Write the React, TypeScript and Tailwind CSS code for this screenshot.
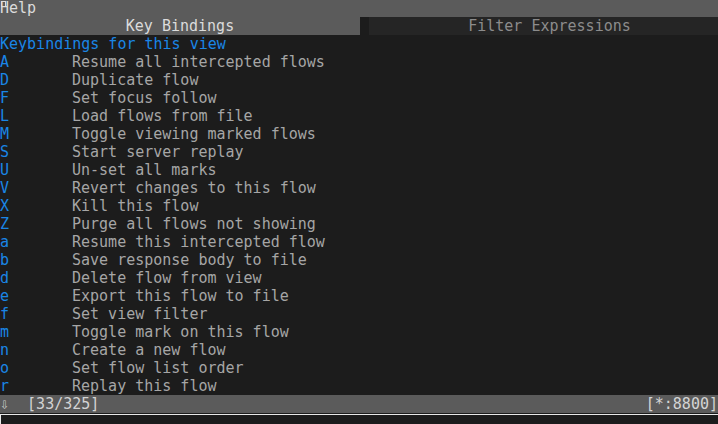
const bindings: [string, string][] = [
  ["A", "Resume all intercepted flows"],
  ["D", "Duplicate flow"],
  ["F", "Set focus follow"],
  ["L", "Load flows from file"],
  ["M", "Toggle viewing marked flows"],
  ["S", "Start server replay"],
  ["U", "Un-set all marks"],
  ["V", "Revert changes to this flow"],
  ["X", "Kill this flow"],
  ["Z", "Purge all flows not showing"],
  ["a", "Resume this intercepted flow"],
  ["b", "Save response body to file"],
  ["d", "Delete flow from view"],
  ["e", "Export this flow to file"],
  ["f", "Set view filter"],
  ["m", "Toggle mark on this flow"],
  ["n", "Create a new flow"],
  ["o", "Set flow list order"],
  ["r", "Replay this flow"],
]

export default function App() {
  return (
    <div className="w-[718px] h-[424px] overflow-hidden bg-[#1c1c1c] font-['DejaVu_Sans_Mono',monospace] text-[15px] leading-[18px] flex flex-col">
      <div className="relative h-[17px] bg-[#5b5b5b] text-[#dcdcdc] leading-[17px] whitespace-pre">
        Help
        <div className="absolute left-[1px] top-[1px] w-[5px] h-[6px] border border-[#dcdcdc]" />
      </div>
      <div className="flex h-[18px] bg-[#5b5b5b]">
        <div className="w-[360px] text-center text-[#dcdcdc]">Key Bindings</div>
        <div className="w-[9px] bg-[#1c1c1c]" />
        <div className="flex-1 bg-[#252525] pl-[12px] text-center text-[#8c8c8c]">Filter Expressions</div>
      </div>
      <div className="h-[18px] text-[#1a86e6]">Keybindings for this view</div>
      <div className="flex flex-col">
        {bindings.map(([key, desc]) => (
          <div key={key} className="flex h-[18px]">
            <span className="w-[72px] text-[#1a86e6]">{key}</span>
            <span className="text-[#a6a6a6]">{desc}</span>
          </div>
        ))}
      </div>
      <div className="flex justify-between h-[18px] bg-[#5b5b5b] text-[#d4d4d4] whitespace-pre">
        <span>
          <span className="text-[#cfcfcf]">⇩</span>  [33/325]
        </span>
        <span>[*:8800]</span>
      </div>
      <div className="flex-1 mt-[1px] border-t border-l border-[#e8e8e8]" />
    </div>
  )
}
